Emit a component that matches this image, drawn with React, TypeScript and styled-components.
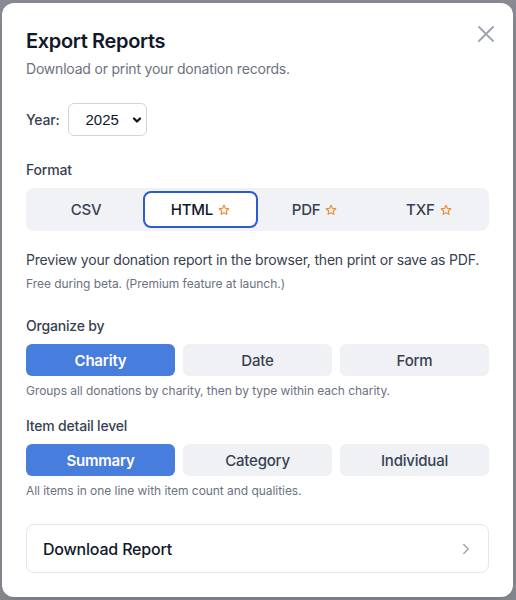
import React, { useState } from "react";
import styled, { createGlobalStyle } from "styled-components";

const Global = createGlobalStyle`
  html, body { margin: 0; padding: 0; }
  body {
    background: #8a8d96;
    font-family: Inter, "Noto Sans", "Liberation Sans", sans-serif;
    -webkit-font-smoothing: antialiased;
    min-height: 600px;
  }
  * { box-sizing: border-box; }
`;

const Backdrop = styled.div`
  width: 516px;
  min-height: 600px;
  padding: 3px 3px 3px 2px;
`;

const Modal = styled.div`
  position: relative;
  background: #ffffff;
  border-radius: 12px;
  padding: 24px;
  display: flex;
  flex-direction: column;
  box-shadow: 0 10px 30px rgba(0, 0, 0, 0.15);
  & > * { flex-shrink: 0; }
`;

const CloseButton = styled.button`
  position: absolute;
  top: 21px;
  right: 17px;
  width: 20px;
  height: 20px;
  padding: 0;
  border: none;
  background: transparent;
  display: flex;
  align-items: center;
  justify-content: center;
  cursor: pointer;
`;

const Title = styled.h2`
  margin: 0;
  font-size: 20px;
  line-height: 28px;
  font-weight: 600;
  color: #111827;
  letter-spacing: -0.35px;
`;

const Subtitle = styled.p`
  margin: 4px 0 0;
  font-size: 14px;
  line-height: 20px;
  color: #6b7280;
  letter-spacing: -0.2px;
`;

const YearRow = styled.div`
  margin-top: 24px;
  display: flex;
  align-items: center;
  gap: 8px;
`;

const YearLabel = styled.span`
  font-size: 14px;
  font-weight: 500;
  color: #374151;
  letter-spacing: -0.2px;
`;

const SelectBox = styled.div`
  width: 79px;
  height: 33px;
  border: 1px solid #d1d5db;
  border-radius: 6px;
  display: flex;
  align-items: center;
  justify-content: space-between;
  padding: 0 4px 0 17px;
  font-family: "Liberation Sans", Arial, sans-serif;
  font-size: 15px;
  color: #111827;
  background: #fff;
`;

const SectionLabel = styled.div<{ $mt: number }>`
  margin-top: ${(p) => p.$mt}px;
  font-size: 14px;
  line-height: 20px;
  font-weight: 500;
  color: #374151;
  letter-spacing: -0.2px;
`;

const Segmented = styled.div`
  margin-top: 8px;
  height: 43px;
  background: #f1f2f6;
  border-radius: 8px;
  padding: 3px;
  display: grid;
  grid-template-columns: repeat(4, 1fr);
`;

const Segment = styled.button<{ $active: boolean }>`
  border-radius: 8px;
  border: ${(p) => (p.$active ? "2px solid #2d5bd1" : "2px solid transparent")};
  background: ${(p) => (p.$active ? "#ffffff" : "transparent")};
  color: ${(p) => (p.$active ? "#111827" : "#374151")};
  font-family: inherit;
  font-size: 15px;
  font-weight: 500;
  letter-spacing: -0.2px;
  display: flex;
  align-items: center;
  justify-content: center;
  gap: 5px;
  padding: 0;
  cursor: pointer;
`;

const Description = styled.p`
  margin: 18px 0 0;
  font-size: 14px;
  line-height: 22px;
  color: #374151;
  letter-spacing: -0.2px;
`;

const Note = styled.p<{ $mt: number }>`
  margin: ${(p) => p.$mt}px 0 0;
  font-size: 12px;
  line-height: 16px;
  color: #6b7280;
  letter-spacing: -0.05px;
`;

const ButtonGroup = styled.div`
  margin-top: 8px;
  display: grid;
  grid-template-columns: repeat(3, 1fr);
  gap: 8px;
`;

const OptionButton = styled.button<{ $active: boolean }>`
  height: 32px;
  border: none;
  border-radius: 6px;
  background: ${(p) => (p.$active ? "#477ddd" : "#f0f1f5")};
  color: ${(p) => (p.$active ? "#ffffff" : "#374151")};
  font-family: inherit;
  font-size: 15px;
  font-weight: ${(p) => (p.$active ? 600 : 500)};
  letter-spacing: -0.2px;
  cursor: pointer;
  padding: 0;
`;

const DownloadCard = styled.button`
  margin-top: 25px;
  height: 49px;
  border: 1px solid #e5e7eb;
  border-radius: 8px;
  background: #fff;
  display: flex;
  align-items: center;
  justify-content: space-between;
  padding: 0 13px 0 16px;
  font-family: inherit;
  font-size: 16px;
  font-weight: 500;
  color: #111827;
  letter-spacing: -0.2px;
  cursor: pointer;
`;

const Star = () => (
  <svg width="12" height="12" viewBox="0 0 24 24" fill="none" stroke="#e8903a" strokeWidth="2.4" strokeLinejoin="round">
    <path d="M12 2.5l2.9 6.1 6.6.8-4.9 4.6 1.3 6.6L12 17.3l-5.9 3.3 1.3-6.6-4.9-4.6 6.6-.8z" />
  </svg>
);

const formats = [
  { label: "CSV", star: false },
  { label: "HTML", star: true },
  { label: "PDF", star: true },
  { label: "TXF", star: true },
];

export default function App() {
  const [format, setFormat] = useState("HTML");
  const [organize, setOrganize] = useState("Charity");
  const [detail, setDetail] = useState("Summary");

  return (
    <>
      <Global />
      <Backdrop>
        <Modal>
          <CloseButton aria-label="Close">
            <svg width="16" height="16" viewBox="0 0 16 16" stroke="#9ca3af" strokeWidth="1.8" strokeLinecap="round">
              <path d="M1 1L15 15M15 1L1 15" />
            </svg>
          </CloseButton>
          <Title>Export Reports</Title>
          <Subtitle>Download or print your donation records.</Subtitle>

          <YearRow>
            <YearLabel>Year:</YearLabel>
            <SelectBox>
              <span>2025</span>
              <svg width="10" height="8" viewBox="0 0 10 8" fill="none" stroke="#111" strokeWidth="2.2" strokeLinecap="round" strokeLinejoin="round">
                <path d="M2 2.5L5 5.5L8 2.5" />
              </svg>
            </SelectBox>
          </YearRow>

          <SectionLabel $mt={24}>Format</SectionLabel>
          <Segmented>
            {formats.map((f) => (
              <Segment key={f.label} $active={format === f.label} onClick={() => setFormat(f.label)}>
                {f.label}
                {f.star && <Star />}
              </Segment>
            ))}
          </Segmented>
          <Description>Preview your donation report in the browser, then print or save as PDF.</Description>
          <Note $mt={5}>Free during beta. (Premium feature at launch.)</Note>

          <SectionLabel $mt={24}>Organize by</SectionLabel>
          <ButtonGroup>
            {["Charity", "Date", "Form"].map((o) => (
              <OptionButton key={o} $active={organize === o} onClick={() => setOrganize(o)}>
                {o}
              </OptionButton>
            ))}
          </ButtonGroup>
          <Note $mt={7}>Groups all donations by charity, then by type within each charity.</Note>

          <SectionLabel $mt={17}>Item detail level</SectionLabel>
          <ButtonGroup>
            {["Summary", "Category", "Individual"].map((o) => (
              <OptionButton key={o} $active={detail === o} onClick={() => setDetail(o)}>
                {o}
              </OptionButton>
            ))}
          </ButtonGroup>
          <Note $mt={7}>All items in one line with item count and qualities.</Note>

          <DownloadCard>
            <span>Download Report</span>
            <svg width="18" height="18" viewBox="0 0 24 24" fill="none" stroke="#9ca3af" strokeWidth="1.8" strokeLinecap="round" strokeLinejoin="round">
              <path d="M9 6l6 6-6 6" />
            </svg>
          </DownloadCard>
        </Modal>
      </Backdrop>
    </>
  );
}
